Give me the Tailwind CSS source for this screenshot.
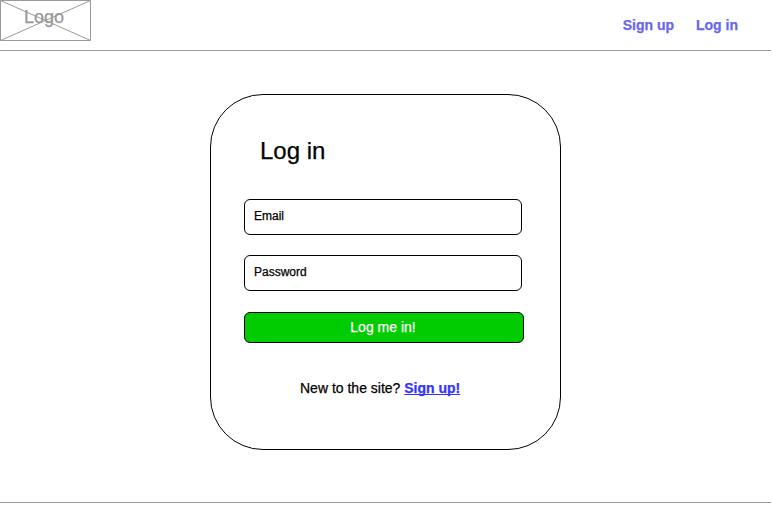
<!DOCTYPE html>
<html lang="en">
<head>
<meta charset="utf-8">
<title>Log in</title>
<script src="https://cdn.jsdelivr.net/npm/@tailwindcss/browser@4"></script>
</head>
<body class="flex h-[514px] w-[772px] flex-col overflow-hidden bg-white font-['Liberation_Sans',Arial,sans-serif] text-black [-webkit-text-stroke:0.25px]">
<header class="mr-px flex h-[51px] shrink-0 items-start justify-between border-b border-[#999999]">
  <div class="relative flex h-[41px] w-[91px] justify-center pr-[3px] pt-[7px] text-[18px] leading-[21px] text-[#999999]">
    <svg class="absolute inset-0" width="91" height="41" viewBox="0 0 91 41" fill="none" stroke="#999999"><path d="M.5 .5H90.5V40.5H.5ZM.5 .5L90.5 40.5M90.5 .5L.5 40.5"/></svg>
    <span>Logo</span>
  </div>
  <nav class="flex gap-[22px] pr-[33px] pt-[17px] text-[14px] leading-4 font-bold text-[#6666ee]">
    <a href="#">Sign up</a>
    <a href="#">Log in</a>
  </nav>
</header>
<main class="mr-px flex h-[452px] shrink-0 flex-col border-b border-[#999999] pt-[43px]">
  <form class="ml-[210px] flex h-[356px] w-[351px] flex-col rounded-[53px] border border-black pl-[33px]">
    <h1 class="mt-[42px] pl-4 text-[24px] leading-[28px]">Log in</h1>
    <div class="mt-[34px] h-9 w-[278px] rounded-md border border-black pl-[9px] pt-[9px] text-[12px] leading-[14px]">Email</div>
    <div class="mt-5 h-9 w-[278px] rounded-md border border-black pl-[9px] pt-[9px] text-[12px] leading-[14px]">Password</div>
    <button type="button" class="mt-[21px] flex h-[31px] w-[280px] justify-center rounded-md border border-black bg-[#00cc00] pr-[2px] pt-[6px] text-[14px] leading-4 text-white">Log me in!</button>
    <p class="mt-[37px] pl-14 text-[14px] leading-4">New to the site? <a href="#" class="font-bold text-[#3333ff] underline [text-decoration-skip-ink:none]">Sign up!</a></p>
  </form>
</main>
</body>
</html>
